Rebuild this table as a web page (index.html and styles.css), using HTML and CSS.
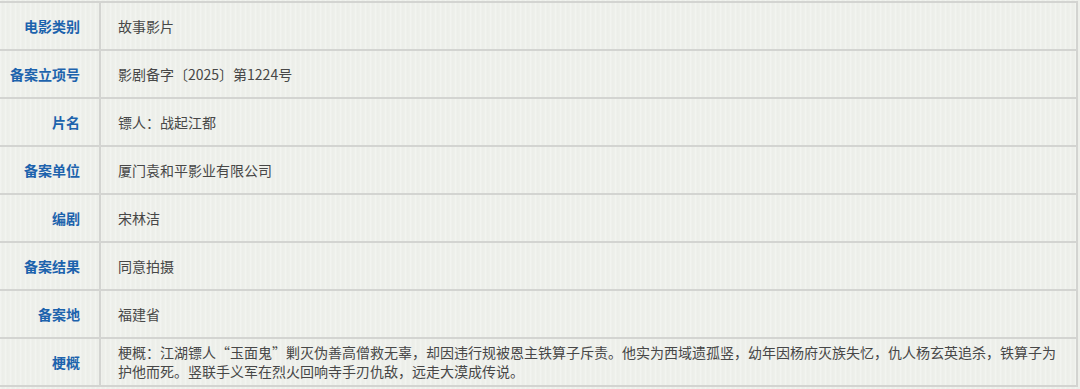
FILE: index.html
```html
<!DOCTYPE html>
<html lang="zh-CN">
<head>
<meta charset="utf-8">
<title>备案信息</title>
<link rel="stylesheet" href="styles.css">
</head>
<body>
<table class="info">
  <tr><th class="label">电影类别</th><td class="value">故事影片</td></tr>
  <tr><th class="label">备案立项号</th><td class="value">影剧备字〔2025〕第1224号</td></tr>
  <tr><th class="label">片名</th><td class="value">镖人：战起江都</td></tr>
  <tr><th class="label">备案单位</th><td class="value">厦门袁和平影业有限公司</td></tr>
  <tr><th class="label">编剧</th><td class="value">宋林洁</td></tr>
  <tr><th class="label">备案结果</th><td class="value">同意拍摄</td></tr>
  <tr><th class="label">备案地</th><td class="value">福建省</td></tr>
  <tr><th class="label">梗概</th><td class="value multi">梗概：江湖镖人“玉面鬼”剿灭伪善高僧救无辜，却因违行规被恩主铁算子斥责。他实为西域遗孤竖，幼年因杨府灭族失忆，仇人杨玄英追杀，铁算子为护他而死。竖联手义军在烈火回响寺手刃仇敌，远走大漠成传说。</td></tr>
</table>
</body>
</html>
```

FILE: styles.css
```css
html, body {
  margin: 0;
  padding: 0;
}

body {
  background-color: #eef0eb;
  background-image: repeating-linear-gradient(90deg,
    rgba(255,255,255,0.25) 0px, rgba(255,255,255,0.25) 1px,
    rgba(0,0,0,0.012) 2px, rgba(0,0,0,0) 5px);
  font-family: "Noto Sans CJK SC", "Noto Sans", sans-serif;
  font-size: 14px;
  width: 1080px;
  height: 389px;
  overflow: hidden;
}

.info {
  border-collapse: collapse;
  width: 1078px;
  margin-top: 1px;
  table-layout: fixed;
}

.info tr {
  height: 48px;
}

.info th,
.info td {
  border: 2px solid #d3d4d1;
  vertical-align: middle;
  padding: 0;
}

.label {
  width: 80px;
  border-left: none !important;
  text-align: right;
  padding-right: 19px !important;
  color: #1d63ad;
  font-weight: bold;
  line-height: 20px;
}

.value {
  text-align: left;
  color: #474747;
  padding-left: 17px !important;
  padding-right: 12px !important;
  line-height: 20px;
}

.multi {
  line-height: 19px;
  padding-top: 4px !important;
  padding-bottom: 4px !important;
}
```
